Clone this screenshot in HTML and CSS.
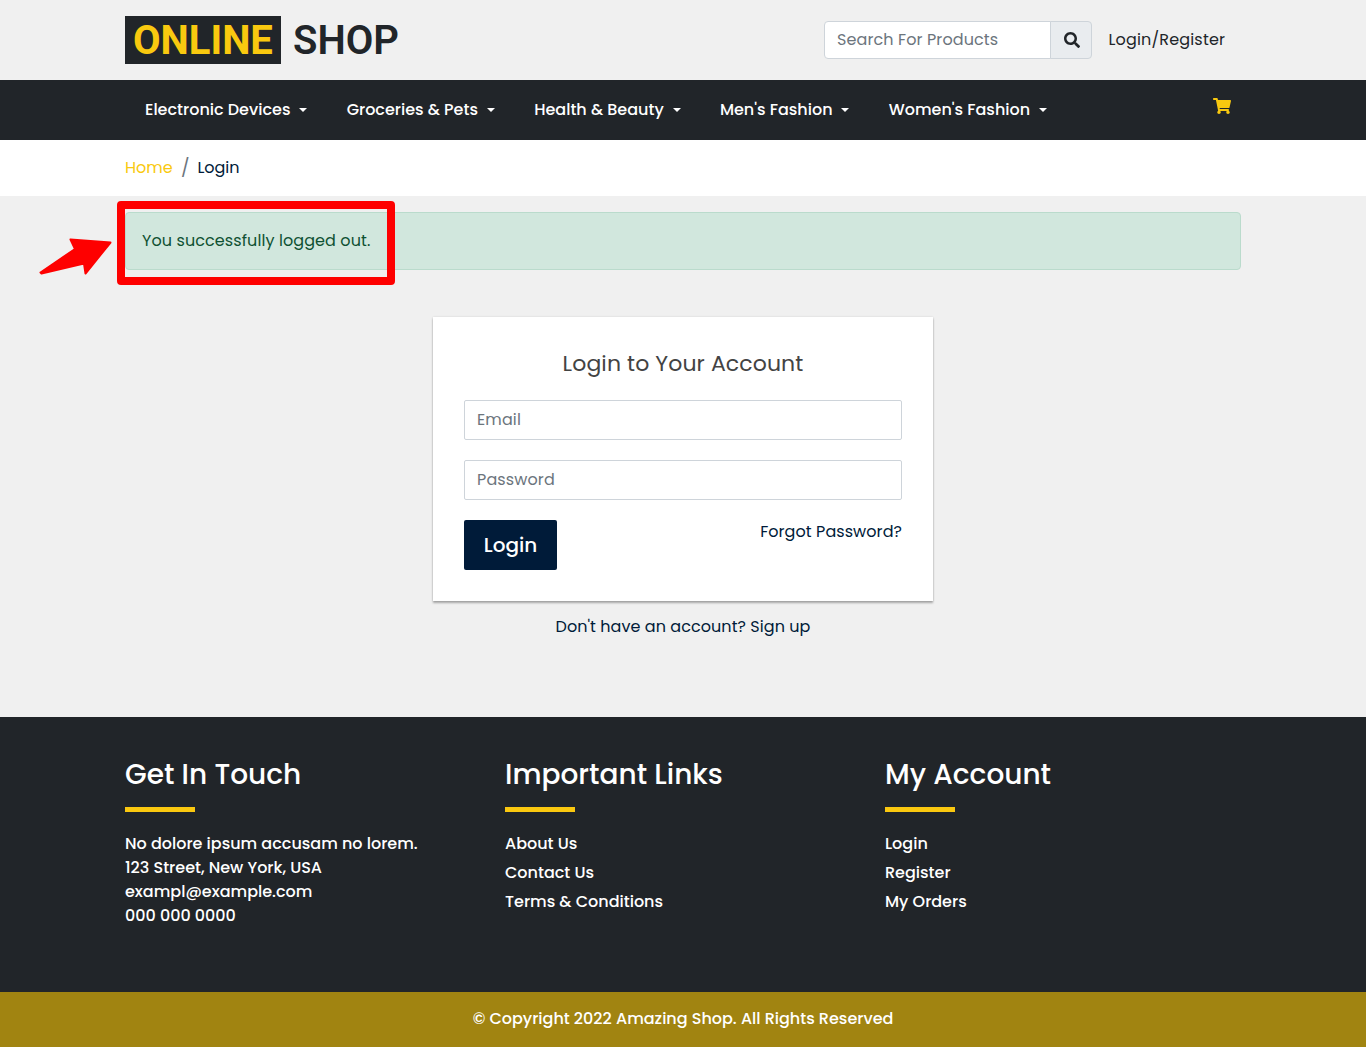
FILE: index.html
```
<!DOCTYPE html>
<html lang="en">
<head>
<meta charset="utf-8">
<title>Online Shop - Login</title>
<link rel="stylesheet" href="styles.css">
</head>
<body>
<header class="topbar">
  <div class="container topbar-row">
    <a class="logo" href="#"><span class="logo-mark">ONLINE</span><span class="logo-name">SHOP</span></a>
    <form class="search">
      <input class="search-input" type="text" placeholder="Search For Products">
      <button class="search-button" type="button" aria-label="Search">
        <svg width="16" height="16" viewBox="0 0 512 512" fill="currentColor"><path d="M505 442.700L405.300 343c-4.500-4.500-10.600-7-17-7H372c27.600-35.300 44-79.700 44-128C416 93.100 322.900 0 208 0S0 93.100 0 208s93.100 208 208 208c48.300 0 92.700-16.400 128-44v16.300c0 6.400 2.500 12.500 7 17l99.700 99.700c9.400 9.400 24.600 9.400 33.900 0l28.300-28.300c9.400-9.400 9.400-24.600.1-34zM208 336c-70.700 0-128-57.200-128-128 0-70.700 57.200-128 128-128 70.700 0 128 57.200 128 128 0 70.700-57.200 128-128 128z"/></svg>
      </button>
    </form>
    <a class="account-link" href="#">Login/Register</a>
  </div>
</header>

<nav class="navbar">
  <div class="container navbar-row">
    <a class="nav-link" href="#">Electronic Devices</a>
    <a class="nav-link" href="#">Groceries &amp; Pets</a>
    <a class="nav-link" href="#">Health &amp; Beauty</a>
    <a class="nav-link" href="#">Men's Fashion</a>
    <a class="nav-link" href="#">Women's Fashion</a>
    <a class="cart" href="#" aria-label="Cart">
      <svg width="18" height="16" viewBox="0 0 576 512" fill="currentColor"><path d="M528.120 301.319l47.273-208C578.806 78.301 567.391 64 551.990 64H159.208l-9.166-44.810C147.758 8.021 137.930 0 126.529 0H24C10.745 0 0 10.745 0 24v16c0 13.255 10.745 24 24 24h69.883l70.248 343.435C147.325 417.100 136 435.222 136 456c0 30.928 25.072 56 56 56s56-25.072 56-56c0-15.674-6.447-29.835-16.824-40h209.647C430.447 426.165 424 440.326 424 456c0 30.928 25.072 56 56 56s56-25.072 56-56c0-22.172-12.888-41.332-31.579-50.405l5.517-24.276c3.413-15.018-8.002-29.319-23.403-29.319H218.117l-6.545-32h293.145c11.206 0 20.920-7.754 23.403-18.681z"/></svg>
    </a>
  </div>
</nav>

<div class="breadcrumb">
  <div class="container breadcrumb-row">
    <a class="crumb-home" href="#">Home</a><span class="crumb-slash">/</span><span class="crumb-current">Login</span>
  </div>
</div>

<main class="main">
  <div class="container">
    <div class="alert">You successfully logged out.</div>
  </div>
  <section class="card">
    <h1 class="card-title">Login to Your Account</h1>
    <input class="field" type="email" placeholder="Email">
    <input class="field" type="password" placeholder="Password">
    <div class="card-actions">
      <button class="login-button" type="button">Login</button>
      <a class="forgot" href="#">Forgot Password?</a>
    </div>
  </section>
  <p class="signup">Don't have an account? <a href="#">Sign up</a></p>
</main>

<footer class="footer">
  <div class="container footer-row">
    <section>
      <h2 class="footer-title">Get In Touch</h2>
      <p class="address">No dolore ipsum accusam no lorem.<br>123 Street, New York, USA<br>exampl@example.com<br>000 000 0000</p>
    </section>
    <section>
      <h2 class="footer-title">Important Links</h2>
      <div class="links"><a href="#">About Us</a><a href="#">Contact Us</a><a href="#">Terms &amp; Conditions</a></div>
    </section>
    <section>
      <h2 class="footer-title">My Account</h2>
      <div class="links"><a href="#">Login</a><a href="#">Register</a><a href="#">My Orders</a></div>
    </section>
  </div>
</footer>
<div class="copyright">© Copyright 2022 Amazing Shop. All Rights Reserved</div>

<div class="callout-box"></div>
<svg class="callout-arrow" width="76" height="40" viewBox="0 0 76 40"><path d="M2.500 35.500 37 12 32.500 2.500 72.500 5.500 47.500 36.500 46 26.500 3.500 36.500Z" fill="#fe0000" stroke="#fe0000" stroke-width="2" stroke-linejoin="round"/></svg>
</body>
</html>
```
FILE: styles.css
```
* { box-sizing: border-box; }

body {
  margin: 0;
  position: relative;
  background: #fff;
  color: #212529;
  font-family: Poppins, Inter, "Liberation Sans", sans-serif;
  font-size: 16px;
  line-height: 24px;
}

a { color: inherit; text-decoration: none; }
h1, h2, p { margin: 0; font-weight: 400; }
input, button { margin: 0; font: inherit; }
svg { display: block; }

.container { width: 1116px; margin: 0 auto; }

/* Top bar */
.topbar { height: 80px; background: #f0f0f0; }
.topbar-row { display: flex; align-items: center; height: 80px; }
.logo {
  display: flex;
  gap: 12px;
  margin-right: auto;
  font-family: Roboto, sans-serif;
  font-size: 40px;
  font-weight: 600;
  line-height: 48px;
}
.logo-mark { width: 156px; height: 48px; padding: 0 8px; background: #212529; color: #f9c90f; font-weight: 700; }
.logo-mark, .logo-name { line-height: 49px; }
.search { display: flex; width: 268px; height: 38px; margin-right: 16px; }
.search-input {
  width: 227px;
  padding: 0 12px;
  border: 1px solid #ced4da;
  border-radius: 4px 0 0 4px;
  background: #fff;
  letter-spacing: .1px;
}
.search-input::placeholder, .field::placeholder { color: #6c757d; opacity: 1; }
.search-button {
  display: flex;
  align-items: center;
  justify-content: center;
  width: 42px;
  margin-left: -1px;
  padding: 0 0 0 1px;
  border: 1px solid #ced4da;
  border-radius: 0 4px 4px 0;
  background: #e9ecef;
  color: #212529;
}
.account-link { width: 133px; padding-left: .5px; letter-spacing: .17px; white-space: nowrap; }

/* Navigation */
.navbar { background: #212529; color: #fff; font-weight: 500; }
.navbar-row { display: flex; align-items: center; gap: 39.4px; height: 60px; padding-left: 20px; }
.nav-link { display: flex; align-items: center; gap: 8.8px; white-space: nowrap; }
.nav-link::after {
  content: "";
  border: 4.8px solid transparent;
  border-top-color: currentColor;
  border-bottom: 0;
}
.cart { margin: 0 10px 8px auto; color: #f9c90f; }

/* Breadcrumb */
.breadcrumb { background: #fff; }
.breadcrumb-row { display: flex; align-items: center; height: 56px; }
.crumb-home { width: 56px; color: #f9c90f; }
.crumb-slash { width: 16.400px; color: #6c757d; font-size: 18px; }
.crumb-current { color: #001b39; }

/* Main */
.main { height: 521px; padding-top: 16px; background: #f0f0f0; }
.alert {
  height: 58px;
  padding: 16px;
  border: 1px solid #badbcc;
  border-radius: 4px;
  background: #d1e7dd;
  color: #0f5132;
  letter-spacing: .09px;
}
.card {
  width: 500px;
  height: 284px;
  margin: 47px auto 0;
  padding: 30px 31px;
  background: #fff;
  box-shadow: 0 2px 2px rgba(0, 0, 0, .3), 0 0 2px rgba(0, 0, 0, .12);
}
.card-title {
  margin-bottom: 20px;
  color: #434343;
  font-size: 22px;
  line-height: 33px;
  text-align: center;
  letter-spacing: .1px;
}
.field {
  display: block;
  width: 100%;
  height: 40px;
  margin-bottom: 20px;
  padding: 0 12px 2px;
  border: 1px solid #ced4da;
  border-radius: 2px;
  background: #fff;
  letter-spacing: .12px;
}
.card-actions { display: flex; justify-content: space-between; align-items: flex-start; }
.login-button {
  width: 93px;
  height: 50px;
  padding: 0;
  border: 0;
  border-radius: 2px;
  background: #001b39;
  color: #fff;
  font-size: 20px;
  font-weight: 500;
}
.forgot { color: #001b39; letter-spacing: .07px; }
.signup { margin-top: 14px; color: #001b39; text-align: center; letter-spacing: .06px; }

/* Footer */
.footer { height: 275px; padding-top: 41px; background: #212529; color: #fff; font-weight: 500; }
.footer-row { display: grid; grid-template-columns: 380px 380px 356px; }
.footer-title { margin-bottom: 20px; font-size: 28px; font-weight: 500; line-height: 34px; }
.footer-title::after { content: ""; display: block; width: 70px; height: 5px; margin-top: 15px; background: #fac80f; }
.address { font-weight: 500; }
.links { display: grid; gap: 5px; }
.copyright {
  height: 55px;
  padding-top: 15px;
  background: #a18411;
  color: #fff;
  font-weight: 500;
  text-align: center;
}

/* Callout drawn over the logout message */
.callout-box {
  position: absolute;
  left: 117px;
  top: 201px;
  width: 278px;
  height: 84px;
  border: 8px solid #fe0000;
  border-radius: 4px;
}
.callout-arrow { position: absolute; left: 38px; top: 237px; }
```
